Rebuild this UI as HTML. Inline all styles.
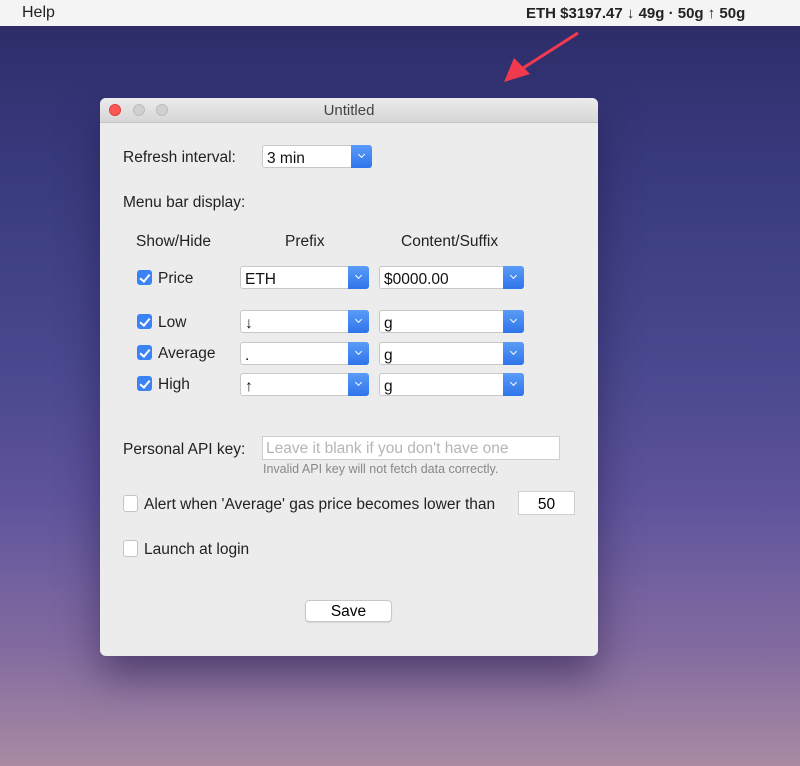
<!DOCTYPE html>
<html><head><style>
body{margin:0;width:800px;height:766px;overflow:hidden;font-family:"Liberation Sans",sans-serif;position:relative;
background:linear-gradient(180deg,#2e2d6a 26px,#37397c 150px,#47478e 350px,#5e539c 500px,#836ba0 650px,#a98aa2 766px);}
.a{position:absolute}
.menu{top:0;left:0;width:800px;height:26px;background:#f4f4f4;font-size:16px;color:#222}
.win{left:100px;top:98px;width:498px;height:558px;background:#ececec;border-radius:6px;box-shadow:0 20px 40px rgba(30,20,60,.5);overflow:hidden}
.tb{left:0;top:0;width:498px;height:24px;background:linear-gradient(#ebebeb,#d6d6d6);border-bottom:1px solid #c4c4c4;text-align:center;font-size:15px;line-height:25px;color:#444}
.dot{width:12px;height:12px;border-radius:50%;top:6px;background:#d0d0d0;border:1px solid #bdbdbd;box-sizing:border-box}
.t{font-size:15.5px;color:#222;white-space:nowrap}
.dd{height:23px;background:#fff;border:1px solid #c8c8c8;box-sizing:border-box;border-radius:3px;font-size:15.5px;line-height:25px;padding-left:4px;color:#111}
.dd:after{content:"";position:absolute;right:-1px;top:-1px;width:21px;height:23px;background:linear-gradient(#5a9cf8,#2f74ea);border-radius:0 3px 3px 0}
.dd:before{content:"";position:absolute;right:7px;top:6px;width:4px;height:4px;border-right:1.5px solid #fff;border-bottom:1.5px solid #fff;transform:rotate(45deg);z-index:2}
.cb{width:15px;height:15px;border-radius:3px;background:#3b82f4;box-sizing:border-box}
.cb:after{content:"";position:absolute;left:5px;top:1.5px;width:3.5px;height:8px;border-right:2px solid #fff;border-bottom:2px solid #fff;transform:rotate(40deg)}
.ub{width:15px;height:17px;border-radius:3px;background:#fff;border:1px solid #c4c4c4;box-sizing:border-box}
</style></head><body>
<div class="a menu"><span class="a" style="left:22px;top:4px">Help</span>
<span class="a" style="left:526px;top:5px;font-size:15px;font-weight:bold">ETH $3197.47 ↓ 49g · 50g ↑ 50g</span></div>
<svg class="a" style="left:500px;top:30px" width="82" height="55"><path d="M78 3 L20 40" stroke="#f23a4e" stroke-width="3"/><path d="M4 52 L14 28 L30 44 Z" fill="#f23a4e"/></svg>
<div class="a win">
<div class="a tb">Untitled</div>
<div class="a dot" style="left:9px;background:#fc5753;border-color:#df3e3a"></div>
<div class="a dot" style="left:33px"></div><div class="a dot" style="left:56px"></div>
<div class="a t" style="left:23px;top:51px">Refresh interval:</div>
<div class="a dd" style="left:162px;top:47px;width:110px">3 min</div>
<div class="a t" style="left:23px;top:96px">Menu bar display:</div>
<div class="a t" style="left:36px;top:135px">Show/Hide</div>
<div class="a t" style="left:185px;top:135px">Prefix</div>
<div class="a t" style="left:301px;top:135px">Content/Suffix</div>

<div class="a cb" style="left:37px;top:172px"></div><div class="a t" style="left:58px;top:172px">Price</div>
<div class="a dd" style="left:140px;top:168px;width:129px">ETH</div>
<div class="a dd" style="left:279px;top:168px;width:145px">$0000.00</div>

<div class="a cb" style="left:37px;top:216px"></div><div class="a t" style="left:58px;top:216px">Low</div>
<div class="a dd" style="left:140px;top:212px;width:129px">↓</div>
<div class="a dd" style="left:279px;top:212px;width:145px">g</div>

<div class="a cb" style="left:37px;top:247px"></div><div class="a t" style="left:58px;top:247px">Average</div>
<div class="a dd" style="left:140px;top:244px;width:129px">.</div>
<div class="a dd" style="left:279px;top:244px;width:145px">g</div>

<div class="a cb" style="left:37px;top:278px"></div><div class="a t" style="left:58px;top:278px">High</div>
<div class="a dd" style="left:140px;top:275px;width:129px">↑</div>
<div class="a dd" style="left:279px;top:275px;width:145px">g</div>

<div class="a t" style="left:23px;top:343px">Personal API key:</div>
<div class="a" style="left:162px;top:338px;width:298px;height:24px;background:#fff;border:1px solid #cfcfcf;box-sizing:border-box;font-size:15.5px;color:#b5b5b5;line-height:23px;padding-left:3px">Leave it blank if you don't have one</div>
<div class="a" style="left:163px;top:364px;font-size:12.5px;color:#888">Invalid API key will not fetch data correctly.</div>
<div class="a ub" style="left:23px;top:397px"></div>
<div class="a t" style="left:44px;top:398px">Alert when 'Average' gas price becomes lower than</div>
<div class="a" style="left:418px;top:393px;width:57px;height:24px;background:#fff;border:1px solid #cfcfcf;box-sizing:border-box;font-size:15.5px;text-align:center;line-height:25px">50</div>
<div class="a ub" style="left:23px;top:442px"></div>
<div class="a t" style="left:44px;top:443px">Launch at login</div>
<div class="a" style="left:205px;top:502px;width:87px;height:22px;background:#fff;border:1px solid #c8c8c8;box-sizing:border-box;border-radius:4px;font-size:15.5px;text-align:center;line-height:22px;box-shadow:0 1px 1px rgba(0,0,0,.1)">Save</div>
</div>
</body></html>
